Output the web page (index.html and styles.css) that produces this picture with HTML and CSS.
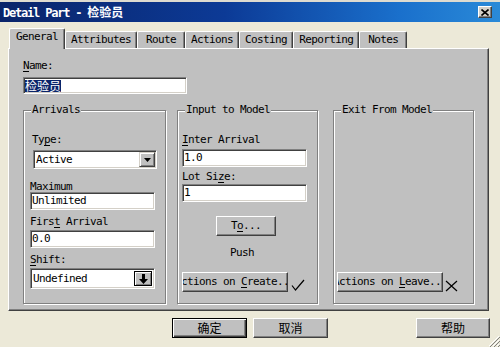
FILE: index.html
```html
<!DOCTYPE html>
<html lang="zh-CN">
<head>
    <meta charset="UTF-8">
    <title>Detail Part - 检验员</title>
    <link rel="stylesheet" href="styles.css">
</head>
<body>
    <div class="titlebar">
        <span class="title">Detail Part - <span class="cjk">检验员</span></span>
        <span class="close-btn">
            <svg width="8" height="7" viewBox="0 0 8 7"><path d="M0.5 0.5L7.5 6.5M7.5 0.5L0.5 6.5" stroke="#000" stroke-width="1.6"/></svg>
        </span>
    </div>

    <div class="tabs">
        <div class="tab active">General</div>
        <div class="tab">Attributes</div>
        <div class="tab">Route</div>
        <div class="tab">Actions</div>
        <div class="tab">Costing</div>
        <div class="tab">Reporting</div>
        <div class="tab">Notes</div>
    </div>

    <div class="panel">
        <label class="name-label"><u>N</u>ame:</label>
        <div class="edit name-edit"><span class="selected cjk">检验员</span></div>

        <div class="groups">
            <div class="group arrivals">
                <div class="legend">Arrivals</div>
                <label class="lbl type-lbl">Ty<u>p</u>e:</label>
                <div class="combo type-combo">
                    <span class="combo-text">Active</span>
                    <span class="drop">
                        <svg width="7" height="4" viewBox="0 0 7 4"><path d="M0 0H7L3.5 4Z"/></svg>
                    </span>
                </div>
                <label class="lbl max-lbl">Ma<u>x</u>imum</label>
                <div class="edit max-edit">Unlimited</div>
                <label class="lbl first-lbl">Firs<u>t</u> Arrival</label>
                <div class="edit first-edit">0.0</div>
                <label class="lbl shift-lbl"><u>S</u>hift:</label>
                <div class="combo shift-combo">
                    <span class="combo-text">Undefined</span>
                    <span class="drop drop-dark">
                        <svg width="9" height="10" viewBox="0 0 9 10"><path d="M3 0H6V5H9L4.5 10L0 5H3Z"/></svg>
                    </span>
                </div>
            </div>

            <div class="group input">
                <div class="legend">Input to Model</div>
                <label class="lbl inter-lbl"><u>I</u>nter Arrival</label>
                <div class="edit inter-edit">1.0</div>
                <label class="lbl lot-lbl">Lot Si<u>z</u>e:</label>
                <div class="edit lot-edit">1</div>
                <div class="btn to-btn"><span>T<u>o</u>...</span></div>
                <div class="push">Push</div>
                <div class="action-row create-row">
                    <div class="btn action-btn"><span>Actions on <u>C</u>reate...</span></div>
                    <svg class="mark" width="14" height="12" viewBox="0 0 14 12"><path d="M1 6.5L4.5 11L13 1" fill="none" stroke="#000" stroke-width="1.2"/></svg>
                </div>
            </div>

            <div class="group exit">
                <div class="legend">Exit From Model</div>
                <div class="action-row leave-row">
                    <div class="btn action-btn"><span>Actions on <u>L</u>eave...</span></div>
                    <svg class="mark" width="13" height="12" viewBox="0 0 13 12"><path d="M1 1L12 11M12 1L1 11" fill="none" stroke="#000" stroke-width="1.2"/></svg>
                </div>
            </div>
        </div>
    </div>

    <div class="footer">
        <div class="btn default ok-btn"><span class="cjk">确定</span></div>
        <div class="btn cancel-btn"><span class="cjk">取消</span></div>
        <div class="btn help-btn"><span class="cjk">帮助</span></div>
    </div>

    <svg class="grip" width="12" height="12" viewBox="0 0 12 12">
        <path d="M11 1L1 11M11 5L5 11M11 9L9 11" stroke="#fff" stroke-width="1"/>
        <path d="M12 2L2 12M12 6L6 12M12 10L10 12" stroke="#808080" stroke-width="1"/>
    </svg>
</body>
</html>
```

FILE: styles.css
```css
body {
    margin: 0;
    width: 500px;
    height: 347px;
    overflow: hidden;
    position: relative;
    background-color: #ece9d8;
    font-family: "DejaVu Sans Mono", "Liberation Mono", monospace;
    font-size: 11px;
    letter-spacing: -0.62px;
    color: #000;
}
.cjk {
    font-family: "Noto Sans CJK SC", sans-serif;
    font-size: 12px;
    letter-spacing: 0;
}
u {
    text-decoration-thickness: 1px;
    text-underline-offset: 2px;
}

/* title bar */
.titlebar {
    border-top: 2px solid #dedbd0;
    height: 20px;
    background: linear-gradient(to right, #0a246a, #0c3a96 45%, #1a70cc 80%, #2a8ad8);
    display: flex;
    align-items: center;
    justify-content: space-between;
    padding-left: 3px;
}
.title {
    color: #fff;
    font-weight: bold;
    font-size: 12px;
    letter-spacing: -1.2px;
    line-height: 20px;
}
.title .cjk {
    font-weight: bold;
    letter-spacing: 0;
}
.close-btn {
    width: 14px;
    height: 12px;
    box-sizing: border-box;
    margin-right: 8px;
    background-color: #d4d0c8;
    border: 1px solid;
    border-color: #fff #404040 #404040 #fff;
    box-shadow: inset -1px -1px #808080;
    display: flex;
    align-items: center;
    justify-content: center;
}

/* tabs */
.tabs {
    margin-top: 6px;
    height: 20px;
    padding-left: 9px;
    display: flex;
    align-items: flex-end;
}
.tab {
    height: 17px;
    box-sizing: border-box;
    min-width: 48px;
    padding: 0 5px;
    background-color: #c0c0c0;
    border-top: 1px solid #fff;
    border-left: 1px solid #fff;
    border-right: 1px solid #404040;
    box-shadow: inset -1px 0 #808080;
    border-radius: 2px 2px 0 0;
    text-align: center;
    line-height: 15px;
    white-space: nowrap;
}
.tab.active {
    height: 21px;
    margin-bottom: -1px;
    padding: 0 6px;
    line-height: 16px;
    position: relative;
    z-index: 1;
}

/* tab page */
.panel {
    margin-left: 8px;
    width: 481px;
    height: 263px;
    box-sizing: border-box;
    background-color: #c0c0c0;
    border-top: 1px solid #fff;
    border-left: 1px solid #fff;
    border-right: 1px solid #404040;
    border-bottom: 1px solid #404040;
    box-shadow: inset -1px -1px #808080;
    padding-left: 14px;
}
.name-label {
    display: block;
    height: 12px;
    line-height: 12px;
    margin-top: 11px;
}
.selected {
    background-color: #0a246a;
    color: #fff;
    line-height: 12px;
}

/* edits and combos */
.edit, .combo {
    box-sizing: border-box;
    background-color: #fff;
    border: 1px solid;
    border-color: #808080 #fff #fff #808080;
    box-shadow: inset 1px 1px #404040, inset -1px -1px #d4d0c8;
    display: flex;
    align-items: center;
    padding-left: 1px;
    line-height: 12px;
    white-space: nowrap;
}
.edit {
    width: 125px;
    height: 18px;
}
.panel .name-edit {
    margin-top: 5px;
    width: 164px;
    height: 17px;
}
.combo {
    padding: 1px;
    justify-content: space-between;
}
.combo-text {
    padding-left: 1px;
}
.drop {
    width: 16px;
    align-self: stretch;
    box-sizing: border-box;
    background-color: #c0c0c0;
    border: 1px solid;
    border-color: #d4d0c8 #404040 #404040 #d4d0c8;
    box-shadow: inset 1px 1px #fff, inset -1px -1px #808080;
    display: flex;
    align-items: center;
    justify-content: center;
}
.drop-dark {
    width: 18px;
    margin: 1px 1px 1px 0;
    border-color: #000;
}

/* group boxes */
.groups {
    margin-top: 16px;
    display: flex;
}
.group {
    height: 194px;
    box-sizing: border-box;
    border: 1px solid #808080;
    box-shadow: inset 1px 1px 0 #fff, 1px 1px 0 #fff;
    display: flex;
    flex-direction: column;
    align-items: flex-start;
    padding-left: var(--pad);
}
.arrivals {
    --pad: 6px;
    width: 143px;
    margin-right: 11px;
}
.input {
    --pad: 4px;
    width: 141px;
    margin-right: 15px;
}
.exit {
    --pad: 3px;
    width: 141px;
}
.legend {
    margin-top: -7px;
    margin-left: calc(7px - var(--pad));
    height: 12px;
    line-height: 12px;
    padding: 0 1px;
    background-color: #c0c0c0;
    white-space: nowrap;
}
.lbl {
    display: block;
    height: 12px;
    line-height: 12px;
    white-space: nowrap;
}
.type-lbl { margin-top: 18px; margin-left: 2px; }
.type-combo { margin-top: 4px; margin-left: 3px; width: 124px; height: 19px; }
.max-lbl { margin-top: 12px; }
.max-edit { margin-top: -1px; }
.first-lbl { margin-top: 6px; }
.first-edit { margin-top: 2px; }
.shift-lbl { margin-top: 6px; }
.shift-combo { margin-top: 2px; width: 125px; height: 21px; }

.inter-lbl { margin-top: 18px; }
.inter-edit { margin-top: 3px; }
.lot-lbl { margin-top: 4px; }
.lot-edit { margin-top: 1px; }

/* buttons */
.btn {
    box-sizing: border-box;
    height: 20px;
    background-color: #c0c0c0;
    border: 1px solid;
    border-color: #fff #404040 #404040 #fff;
    box-shadow: inset -1px -1px #808080;
    display: flex;
    align-items: center;
    justify-content: center;
    overflow: hidden;
    white-space: nowrap;
    line-height: 12px;
}
.btn.default {
    border-color: #000;
    box-shadow: inset 1px 1px #fff, inset -1px -1px #404040, inset -2px -2px #808080;
}
.to-btn {
    margin-top: 14px;
    margin-left: 34px;
    width: 60px;
}
.push {
    margin-top: 11px;
    margin-left: 48px;
    height: 12px;
    line-height: 12px;
}
.action-row {
    display: flex;
    align-items: flex-end;
}
.create-row { margin-top: 13px; }
.leave-row { margin-top: 156px; }
.action-btn {
    width: 106px;
}
.create-row .mark { margin-left: 3px; margin-bottom: 1px; }
.leave-row .mark { margin-left: 2px; margin-bottom: 0; }

/* dialog buttons */
.footer {
    margin-top: 7px;
    display: flex;
}
.footer .btn {
    width: 75px;
}
.footer .cjk {
    line-height: 12px;
}
.ok-btn { margin-left: 172px; }
.cancel-btn { margin-left: 6px; }
.footer .help-btn { margin-left: 88px; width: 74px; }

.grip {
    position: absolute;
    right: 0;
    bottom: 0;
}
```
